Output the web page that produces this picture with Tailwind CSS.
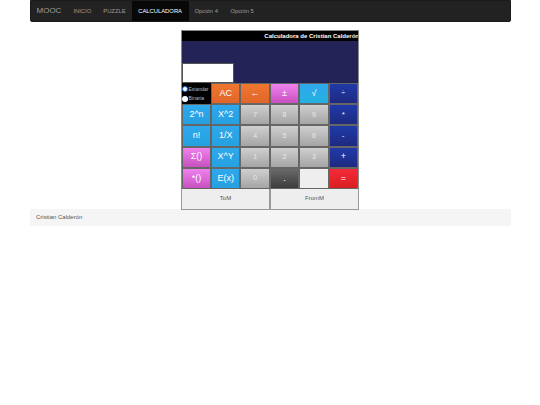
<!DOCTYPE html>
<html><head><meta charset="utf-8"><script src="https://cdn.jsdelivr.net/npm/@tailwindcss/browser@4"></script></head>
<body class="bg-white font-['Liberation_Sans',sans-serif] w-[540px] h-[405px] overflow-hidden">
<div class="w-[481px] ml-[29.5px]">
<nav class="h-[22px] bg-[#222222] border border-[#1a1a1a] rounded-b-[2px] flex items-stretch text-[5.85px] text-[#9d9d9d]">
  <span class="flex items-center pl-[6px] pr-[6px] text-[8px]">MOOC</span>
  <span class="flex items-center px-[6px]">INICIO</span>
  <span class="flex items-center px-[6px]">PUZZLE</span>
  <span class="flex items-center px-[6.5px] bg-[#080808] text-white">CALCULADORA</span>
  <span class="flex items-center px-[6px]">Opción 4</span>
  <span class="flex items-center px-[6.5px]">Opción 5</span>
</nav>
<main class="w-[178px] mx-auto mt-[8px] border-x border-t border-[#8a8a8a] bg-[#232358] flex flex-col">
  <div class="h-[10px] bg-black text-white text-[6px] font-bold leading-[10px] whitespace-nowrap overflow-hidden flex justify-end"><span class="-mr-[1px]">Calculadora de Cristian Calderón</span></div>
  <div class="h-[42px] flex items-end"><div class="w-[52px] h-[20px] bg-white border border-[#555]"></div></div>
  <div class="grid grid-cols-[29px_repeat(5,1fr)] grid-rows-[repeat(5,21.2px)] text-white text-[9px]">
    <div class="bg-black text-[5px] text-[#bbb] flex flex-col pt-[1.5px]">
      <label class="flex items-center h-[9.5px]"><span class="w-[6px] h-[6px] rounded-full bg-white border-[1.5px] border-[#1e73d8]"></span><span class="ml-[0.5px]">Estandar</span></label>
      <label class="flex items-center h-[9.5px]"><span class="w-[6px] h-[6px] rounded-full bg-white"></span><span class="ml-[0.5px]">Binaria</span></label>
    </div>
    <button class="border border-[#666] bg-gradient-to-b from-[#f0772f] to-[#e0652a]">AC</button>
    <button class="border border-[#666] bg-gradient-to-b from-[#f0772f] to-[#e0652a]">←</button>
    <button class="border border-[#666] bg-gradient-to-b from-[#ee82ee] to-[#c850c0]">±</button>
    <button class="border border-[#666] bg-gradient-to-b from-[#2fa8ec] to-[#25b0e0]">√</button>
    <button class="border border-[#666] bg-gradient-to-b from-[#1f3aa8] to-[#1e2a80] text-[7px]">÷</button>

    <button class="border border-[#666] bg-gradient-to-b from-[#2fa8ec] to-[#25a0e0]">2^n</button>
    <button class="border border-[#666] bg-gradient-to-b from-[#2fa8ec] to-[#25a0e0]">X^2</button>
    <button class="border border-[#666] bg-gradient-to-b from-[#cfcfcf] to-[#a5a5a5] text-[7px] text-[#e8e8e8]">7</button>
    <button class="border border-[#666] bg-gradient-to-b from-[#cfcfcf] to-[#a5a5a5] text-[7px] text-[#e8e8e8]">8</button>
    <button class="border border-[#666] bg-gradient-to-b from-[#cfcfcf] to-[#a5a5a5] text-[7px] text-[#e8e8e8]">9</button>
    <button class="border border-[#666] bg-gradient-to-b from-[#1f3aa8] to-[#1e2a80] text-[7px]">*</button>

    <button class="border border-[#666] bg-gradient-to-b from-[#2fa8ec] to-[#25a0e0]">n!</button>
    <button class="border border-[#666] bg-gradient-to-b from-[#2fa8ec] to-[#25a0e0]">1/X</button>
    <button class="border border-[#666] bg-gradient-to-b from-[#cfcfcf] to-[#a5a5a5] text-[7px] text-[#e8e8e8]">4</button>
    <button class="border border-[#666] bg-gradient-to-b from-[#cfcfcf] to-[#a5a5a5] text-[7px] text-[#e8e8e8]">5</button>
    <button class="border border-[#666] bg-gradient-to-b from-[#cfcfcf] to-[#a5a5a5] text-[7px] text-[#e8e8e8]">6</button>
    <button class="border border-[#666] bg-gradient-to-b from-[#1f3aa8] to-[#1e2a80] text-[7px]">-</button>

    <button class="border border-[#666] bg-gradient-to-b from-[#ee82ee] to-[#c850c0]">Σ()</button>
    <button class="border border-[#666] bg-gradient-to-b from-[#2fa8ec] to-[#25a0e0]">X^Y</button>
    <button class="border border-[#666] bg-gradient-to-b from-[#cfcfcf] to-[#a5a5a5] text-[7px] text-[#e8e8e8]">1</button>
    <button class="border border-[#666] bg-gradient-to-b from-[#cfcfcf] to-[#a5a5a5] text-[7px] text-[#e8e8e8]">2</button>
    <button class="border border-[#666] bg-gradient-to-b from-[#cfcfcf] to-[#a5a5a5] text-[7px] text-[#e8e8e8]">3</button>
    <button class="border border-[#666] bg-gradient-to-b from-[#1f3aa8] to-[#1e2a80] text-[9px]">+</button>

    <button class="border border-[#666] bg-gradient-to-b from-[#ee82ee] to-[#c850c0]">*()</button>
    <button class="border border-[#666] bg-gradient-to-b from-[#2fa8ec] to-[#25a0e0]">E(x)</button>
    <button class="border border-[#666] bg-gradient-to-b from-[#cfcfcf] to-[#a5a5a5] text-[7px] text-[#e8e8e8]">0</button>
    <button class="border border-[#666] bg-gradient-to-b from-[#6a6a6a] to-[#3c3c3c] text-[9px]">.</button>
    <button class="border border-[#666] bg-[#eeeeee] text-[9px]">.</button>
    <button class="border border-[#666] bg-gradient-to-b from-[#f52a3a] to-[#d81f20] text-[9px]">=</button>
  </div>
</main>
<div class="w-[178px] h-[21px] mx-auto relative grid grid-cols-2 text-[6px] text-[#555]">
  <button class="bg-[#eeeeee] border-x border-b border-[#999]">ToM</button>
  <button class="bg-[#eeeeee] border-r border-b border-l border-l-[#999] border-[#999]">FromM</button>
</div>
<footer class="h-[17px] -mt-[1px] bg-[#f5f5f5] text-[6px] text-[#555] flex items-center pl-[6.5px]">Cristian Calderón</footer>
</div>
</body></html>
